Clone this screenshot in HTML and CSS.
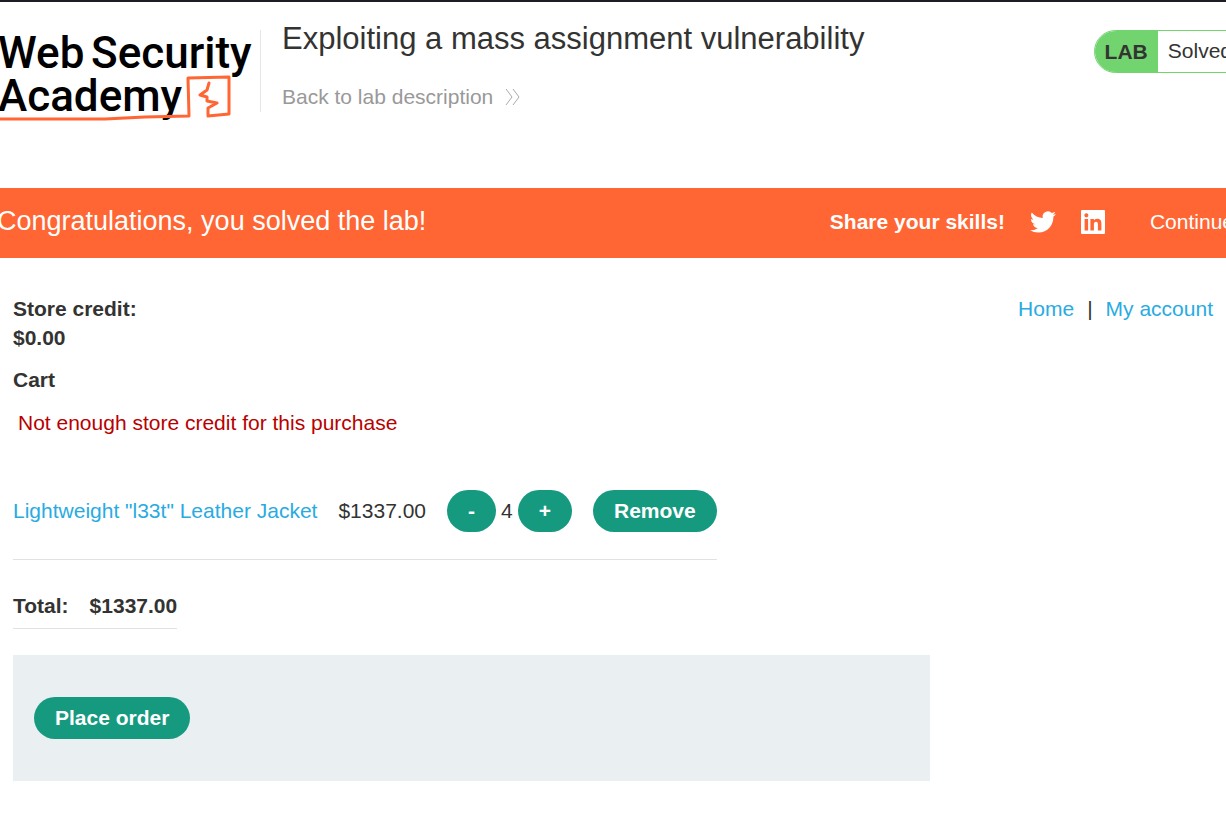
FILE: index.html
```html
<!DOCTYPE html>
<html lang="en">
<head>
  <meta charset="UTF-8">
  <meta name="viewport" content="width=device-width, initial-scale=1.0">
  <title>Exploiting a mass assignment vulnerability</title>
  <link rel="stylesheet" href="styles.css">
</head>
<body>
  <!-- Lab header -->
  <header class="lab-header">
    <a class="logo" href="#" aria-label="Web Security Academy">
      <svg width="265" height="100" viewBox="0 0 265 100">
        <g class="logo-text">
          <text x="3" y="44">Web</text>
          <text x="96" y="44">Security</text>
          <text x="3" y="87">Academy</text>
        </g>
        <g class="logo-mark">
          <path d="M0 95 L110 95 L150 93 L194 92 L193 54 L234 53 L234 90 L213 92 L213 84 L222 79 L212 77 L212 73 L205 71 L212 66 L214 59"/>
        </g>
      </svg>
    </a>
    <div class="title-container">
      <h1>Exploiting a mass assignment vulnerability</h1>
      <a class="link-back" href="#">
        Back to lab description
        <svg width="16" height="16" viewBox="0 0 16 16">
          <path d="M1 0 L7 8 L1 16 M8 0 L14 8 L8 16"/>
        </svg>
      </a>
    </div>
    <div class="lab-status">
      <span class="lab-label">LAB</span>
      <p>Solved</p>
    </div>
  </header>

  <!-- Solved banner -->
  <section class="banner">
    <h4>Congratulations, you solved the lab!</h4>
    <div class="share">
      <span class="share-label">Share your skills!</span>
      <a href="#" aria-label="Twitter">
        <svg width="26" height="26" viewBox="0 0 24 24">
          <path d="M23.950 4.570a10 10 0 0 1-2.820.770 4.960 4.960 0 0 0 2.160-2.720c-.950.550-2 .950-3.130 1.180a4.920 4.920 0 0 0-8.380 4.480C7.690 8.090 4.070 6.130 1.640 3.160a4.820 4.820 0 0 0-.670 2.480c0 1.710.870 3.210 2.190 4.100a4.900 4.900 0 0 1-2.230-.620v.060a4.920 4.920 0 0 0 3.950 4.830 5 5 0 0 1-2.210.080 4.940 4.940 0 0 0 4.600 3.420A9.870 9.870 0 0 1 0 19.540a14 14 0 0 0 7.550 2.210c9.050 0 14-7.500 14-13.990 0-.210 0-.420-.020-.630a9.940 9.940 0 0 0 2.420-2.560z"/>
        </svg>
      </a>
      <a href="#" aria-label="LinkedIn">
        <svg width="24" height="24" viewBox="0 0 24 24">
          <path fill-rule="evenodd" d="M1 0h22a1 1 0 0 1 1 1v22a1 1 0 0 1-1 1H1a1 1 0 0 1-1-1V1a1 1 0 0 1 1-1zM3.600 9v11.400h3.500V9zM5.350 3.300a2.050 2.050 0 1 0 0 4.100 2.050 2.050 0 0 0 0-4.100zM9.400 9v11.400h3.500v-5.700c0-1.500.300-2.900 2.100-2.900s1.900 1.700 1.900 3v5.600h3.500v-6.300c0-3-.600-5.400-4.200-5.400-1.700 0-2.800.900-3.300 1.800V9z"/>
        </svg>
      </a>
      <a class="continue" href="#">Continue</a>
    </div>
  </section>

  <!-- Shop -->
  <main class="shop">
    <div class="shop-header">
      <p class="credit"><strong>Store credit:<br>$0.00</strong></p>
      <nav class="top-links">
        <a href="#">Home</a><span>|</span><a href="#">My account</a>
      </nav>
    </div>

    <h2>Cart</h2>
    <p class="warning">Not enough store credit for this purchase</p>

    <table class="cart">
      <tbody>
        <tr>
          <td><a href="#">Lightweight "l33t" Leather Jacket</a></td>
          <td>$1337.00</td>
          <td>
            <div class="quantity">
              <button class="button" type="button">-</button>
              <span>4</span>
              <button class="button" type="button">+</button>
            </div>
          </td>
          <td><button class="button" type="button">Remove</button></td>
        </tr>
      </tbody>
    </table>

    <table class="total">
      <tbody>
        <tr>
          <th>Total:</th>
          <th>$1337.00</th>
        </tr>
      </tbody>
    </table>

    <form class="order-form">
      <button class="button" type="button">Place order</button>
    </form>
  </main>
</body>
</html>
```
FILE: styles.css
```css
* {
  box-sizing: border-box;
}
body {
  margin: 0;
  border-top: 2px solid #1e1c24;
  font-family: "Liberation Sans", Arial, sans-serif;
  font-size: 21px;
  line-height: 29px;
  color: #333332;
  background-color: #fff;
  overflow-x: hidden;
}
h1, h2, h4, p {
  margin: 0;
}
a {
  color: #29abe2;
  text-decoration: none;
}

/* Header and banner run a little past both window edges */
.lab-header, .banner {
  display: flex;
  margin: 0 -26px 0 -5px;
  white-space: nowrap;
}
.lab-header {
  height: 186px;
  padding-top: 22px;
  align-items: flex-start;
}
.logo {
  height: 100px;
}
.logo-text {
  font-family: Roboto, sans-serif;
  font-size: 44px;
  font-weight: 500;
  fill: #000;
}
.logo-mark {
  fill: none;
  stroke: #ff6633;
  stroke-width: 3;
  stroke-linejoin: round;
  stroke-linecap: round;
}
.title-container {
  flex: 1;
  margin-top: 6px;
  padding-left: 21px;
  height: 82px;
  border-left: 1px solid #e6e6e6;
}
.title-container h1 {
  margin: -10px 0 25px;
  font-size: 31px;
  font-weight: normal;
  line-height: 37px;
}
.link-back {
  display: flex;
  align-items: center;
  gap: 12px;
  color: #999;
}
.link-back svg {
  fill: none;
  stroke: #aaa;
}
.lab-status {
  display: flex;
  margin-top: 6px;
  height: 43px;
  border: 1px solid #72d46e;
  border-radius: 22px;
  overflow: hidden;
  line-height: 40px;
}
.lab-label {
  padding: 0 10px;
  font-weight: bold;
  line-height: 42px;
  background-color: #72d46e;
}
.lab-status p {
  padding: 0 19px 0 10px;
}
.banner {
  height: 70px;
  padding-bottom: 3px;
  align-items: center;
  justify-content: space-between;
  background-color: #ff6633;
  color: #fff;
}
.banner h4 {
  padding-left: 2px;
  font-size: 27px;
  font-weight: normal;
}
.share {
  display: flex;
  align-items: center;
  gap: 25px;
  padding-right: 18px;
}
.share svg {
  display: block;
  fill: #fff;
}
.share-label {
  font-weight: bold;
}
.continue {
  margin-left: 20px;
  color: #fff;
}

/* Shop */
.shop {
  padding: 36px 13px;
}
.shop-header {
  display: flex;
  justify-content: space-between;
}
.top-links {
  display: flex;
  gap: 13px;
}
h2 {
  margin-top: 13px;
  font-size: 21px;
  line-height: 29px;
}
.warning {
  margin-top: 14px;
  padding-left: 5px;
  color: #b80000;
}
table {
  border-collapse: collapse;
}
td, th {
  padding: 0 21px 0 0;
  text-align: left;
}
td:last-child, th:last-child {
  padding-right: 0;
}
.cart {
  margin-top: 26px;
}
.cart td {
  height: 96px;
  border-bottom: 1px solid #e1e1e1;
}
.quantity {
  display: flex;
  align-items: center;
  gap: 5px;
}
.total {
  margin-top: 24px;
}
.total th {
  height: 45px;
  border-bottom: 1px solid #e1e1e1;
}
.button {
  display: block;
  height: 42px;
  padding: 0 21px;
  border: none;
  border-radius: 21px;
  background-color: #159a80;
  color: #fff;
  font: bold 21px "Liberation Sans", Arial, sans-serif;
  cursor: pointer;
}
.button:hover {
  background-color: #12836d;
}
.order-form {
  margin-top: 26px;
  width: 76.4%;
  padding: 42px 21px;
  background-color: #eaeff2;
}
```
